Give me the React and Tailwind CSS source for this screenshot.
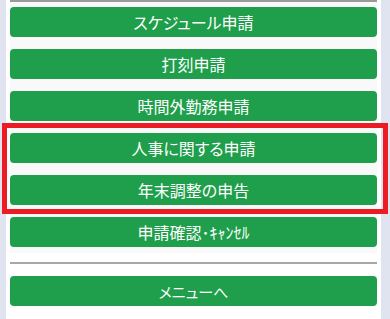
import React from 'react';

const items = ['スケジュール申請', '打刻申請', '時間外勤務申請', '人事に関する申請', '年末調整の申告', '申請確認･ｷｬﾝｾﾙ'];

const btn = "w-full h-[30px] rounded-[4px] bg-[#1f9f4b] text-white flex items-center justify-center leading-none [font-feature-settings:'palt']";

export default function App() {
  return (
    <div className="relative w-[390px] h-[319px] bg-[#dfe4f0] overflow-hidden" style={{ fontFamily: '"Noto Sans CJK JP", "Noto Sans", sans-serif' }}>
      <div className="ml-[6px] w-[375px] h-full bg-white px-[4px]">
        <div className="h-[2px] bg-[#9a9a9a]" />
        <div className="bg-[#f9f9f9] pt-[5px] pb-[6px] flex flex-col gap-[12px]">
          {items.map((label) => (
            <button key={label} className={`${btn} text-[16px]`}>{label}</button>
          ))}
        </div>
        <div className="mt-[9px] h-[2px] bg-[#a8a8a8]" />
        <div className="pt-[12px]">
          <button className={`${btn} text-[15px]`}>メニューへ</button>
        </div>
      </div>
      {/* annotation */}
      <div className="absolute left-[2px] top-[123px] w-[386px] h-[91px] border-[5px] border-[#ec1c24]" />
    </div>
  );
}
